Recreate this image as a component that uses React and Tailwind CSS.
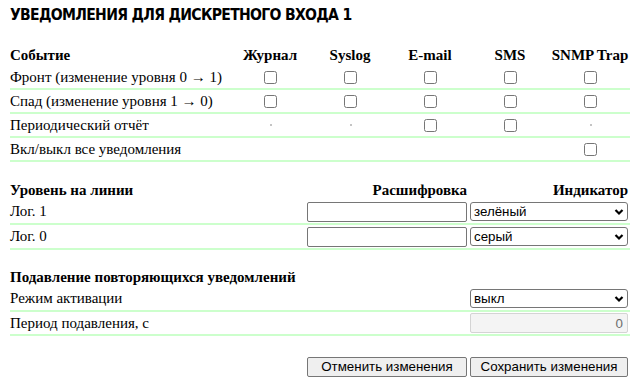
import { useState } from 'react';

const serif = { fontFamily: '"Liberation Serif", "Times New Roman", serif' };

const channels = ['Журнал', 'Syslog', 'E-mail', 'SMS', 'SNMP Trap'];

// which channels are available per event: true = checkbox, 'dot' = n/a marker, null = empty
const events = [
  { label: 'Фронт (изменение уровня 0 → 1)', cells: [true, true, true, true, true] },
  { label: 'Спад (изменение уровня 1 → 0)', cells: [true, true, true, true, true] },
  { label: 'Периодический отчёт', cells: ['dot', 'dot', true, true, 'dot'] },
  { label: 'Вкл/выкл все уведомления', cells: [null, null, null, null, true] },
];

function Chevron() {
  return (
    <svg
      width="10"
      height="7"
      viewBox="0 0 10 7"
      className="absolute right-[4px] top-1/2 -translate-y-1/2 pointer-events-none"
    >
      <polyline points="1.5,1.5 5,5 8.5,1.5" fill="none" stroke="#000" strokeWidth="2.2" />
    </svg>
  );
}

function Select({ value, options, className = '' }) {
  const [val, setVal] = useState(value);
  return (
    <div className={`relative ${className}`}>
      <select
        value={val}
        onChange={e => setVal(e.target.value)}
        className="appearance-none w-full h-[19px] border border-[#767676] rounded-[3px] bg-white pl-[3px] text-[13.33px] leading-[17px] text-black font-['Liberation_Sans',Arial,sans-serif]"
      >
        {options.map(o => (
          <option key={o} value={o}>{o}</option>
        ))}
      </select>
      <Chevron />
    </div>
  );
}

function Row({ children, className = '' }) {
  return (
    <div className={`flex items-center border-b-2 border-[#ccffcc] ${className}`}>
      {children}
    </div>
  );
}

export default function App() {
  return (
    <div className="w-[634px] h-[380px] bg-white text-black pl-[10px] pr-[4px]" style={serif}>
      <div className="h-[44px] pt-[6px]">
        <h1 className="text-[15.6px] leading-[18px] tracking-[-0.7px] font-bold font-['DejaVu_Sans_Condensed','DejaVu_Sans',Verdana,sans-serif]">
          УВЕДОМЛЕНИЯ ДЛЯ ДИСКРЕТНОГО ВХОДА 1
        </h1>
      </div>

      {/* Event / channel matrix */}
      <div className="text-[15px] whitespace-nowrap">
        <div className="flex items-center h-[22px] font-bold">
          <div className="w-[220px]">Событие</div>
          {channels.map(c => (
            <div key={c} className="w-[80px] text-center">{c}</div>
          ))}
        </div>
        {events.map(ev => (
          <Row key={ev.label} className="h-[24px]">
            <div className="w-[220px]">{ev.label}</div>
            {ev.cells.map((cell, i) => (
              <div key={i} className="w-[80px] flex justify-center">
                {cell === true && <input type="checkbox" className="w-[13px] h-[13px] ml-px" />}
                {cell === 'dot' && <span className="w-[2px] h-[2px] bg-[#c4c4c4] ml-px" />}
              </div>
            ))}
          </Row>
        ))}
      </div>

      {/* Line level */}
      <div className="text-[15px] mt-[18px]">
        <div className="flex items-center h-[20px] font-bold">
          <div className="flex-1">Уровень на линии</div>
          <div className="w-[160px] text-right">Расшифровка</div>
          <div className="w-[158px] ml-[3px] mr-[2px] text-right">Индикатор</div>
        </div>
        {[['Лог. 1', 'зелёный'], ['Лог. 0', 'серый']].map(([label, color]) => (
          <Row key={label} className="h-[25px]">
            <div className="flex-1">{label}</div>
            <input
              type="text"
              className="w-[160px] h-[20px] border border-[#767676] rounded-[2px] bg-white"
            />
            <Select
              value={color}
              options={['зелёный', 'красный', 'жёлтый', 'серый']}
              className="w-[158px] ml-[3px] mr-[2px]"
            />
          </Row>
        ))}
      </div>

      {/* Repeat suppression */}
      <div className="text-[15px] mt-[18px]">
        <div className="flex items-center h-[19px] font-bold">
          Подавление повторяющихся уведомлений
        </div>
        <Row className="h-[25px]">
          <div className="flex-1">Режим активации</div>
          <Select value="выкл" options={['выкл', 'вкл']} className="w-[158px] mr-[2px]" />
        </Row>
        <Row className="h-[24px]">
          <div className="flex-1">Период подавления, с</div>
          <input
            type="text"
            disabled
            value="0"
            className="w-[158px] mr-[2px] h-[20px] border border-[#d4d4d4] rounded-[2px] bg-[#f4f4f4] text-right pr-[4px] text-[13.33px] text-[#6d6d6d] font-['Liberation_Sans',Arial,sans-serif]"
          />
        </Row>
      </div>

      <div className="flex justify-end mt-[21px] pr-[2px] gap-[3px] text-[13.33px] font-['Liberation_Sans',Arial,sans-serif]">
        <button className="w-[160px] h-[20px] border border-[#767676] rounded-[2px] bg-[#efefef] leading-[18px]">
          Отменить изменения
        </button>
        <button className="w-[158px] h-[20px] border border-[#767676] rounded-[2px] bg-[#efefef] leading-[18px]">
          Сохранить изменения
        </button>
      </div>
    </div>
  );
}
